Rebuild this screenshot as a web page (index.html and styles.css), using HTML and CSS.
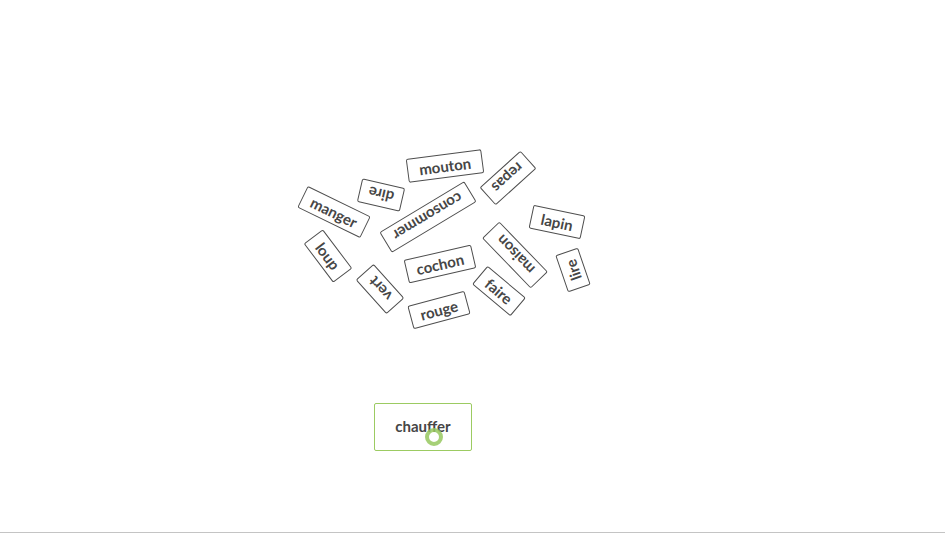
FILE: index.html
```html
<!DOCTYPE html>
<html lang="fr">
<head>
<meta charset="utf-8">
<title>Mots</title>
<link rel="stylesheet" href="styles.css">
</head>
<body>
<main class="stage">
  <div class="tile t-mouton">mouton</div>
  <div class="tile t-dire">dire</div>
  <div class="tile t-manger">manger</div>
  <div class="tile t-consommer">consommer</div>
  <div class="tile t-repas">repas</div>
  <div class="tile t-lapin">lapin</div>
  <div class="tile t-loup">loup</div>
  <div class="tile t-cochon">cochon</div>
  <div class="tile t-maison">maison</div>
  <div class="tile t-vert">vert</div>
  <div class="tile t-faire">faire</div>
  <div class="tile t-lire">lire</div>
  <div class="tile t-rouge">rouge</div>
  <div class="target">
    <span class="target-word">chauffer</span>
    <span class="cursor-ring"></span>
  </div>
</main>
</body>
</html>
```
FILE: styles.css
```css
html, body {
  margin: 0;
  padding: 0;
  background: #ffffff;
}

body {
  font-family: "Lato", "Open Sans", "DejaVu Sans", sans-serif;
  color: #464646;
}

.stage {
  position: relative;
  height: 532px;
  border-bottom: 1px solid #c4c4c4;
  overflow: hidden;
}

.tile {
  position: absolute;
  box-sizing: border-box;
  height: 24px;
  display: flex;
  align-items: center;
  justify-content: center;
  border: 1px solid #4e4e4e;
  border-radius: 2px;
  background: #ffffff;
  font-size: 15px;
  font-weight: 700;
  line-height: 1;
  color: #464646;
  white-space: nowrap;
  transform: translate(-50%, -50%) rotate(var(--rot));
}

.t-mouton    { left: 445px; top: 166px; width: 76px; --rot: -7.5deg; }
.t-dire      { left: 381px; top: 195px; width: 44px; --rot: 193deg; }
.t-manger    { left: 334px; top: 212px; width: 70px; --rot: 26deg; }
.t-consommer { left: 428px; top: 217px; width: 99px; --rot: 149deg; }
.t-repas     { left: 508px; top: 178px; width: 55px; --rot: 138deg; }
.t-lapin     { left: 557px; top: 222px; width: 53px; --rot: 12deg; }
.t-loup      { left: 328px; top: 256px; width: 49px; --rot: 53deg; }
.t-cochon    { left: 440px; top: 264px; width: 69px; --rot: -13deg; }
.t-maison    { left: 515px; top: 255px; width: 70px; --rot: 226deg; }
.t-vert      { left: 380px; top: 289px; width: 46px; --rot: 228deg; }
.t-faire     { left: 499px; top: 291px; width: 50px; --rot: 40deg; }
.t-lire      { left: 573px; top: 270px; width: 39px; --rot: -109deg; }
.t-rouge     { left: 439px; top: 310px; width: 59px; --rot: -15deg; }

.target {
  position: absolute;
  left: 374px;
  top: 403px;
  box-sizing: border-box;
  width: 98px;
  height: 48px;
  display: flex;
  align-items: center;
  justify-content: center;
  border: 1px solid #9ccb62;
  border-radius: 2px;
  background: #ffffff;
}

.target-word {
  font-size: 15px;
  font-weight: 700;
  color: #464646;
  margin-top: -3px;
}

.cursor-ring {
  position: absolute;
  left: 50px;
  top: 24px;
  box-sizing: border-box;
  width: 18px;
  height: 18px;
  border: 4px solid rgba(150, 200, 95, 0.85);
  border-radius: 50%;
}
```
